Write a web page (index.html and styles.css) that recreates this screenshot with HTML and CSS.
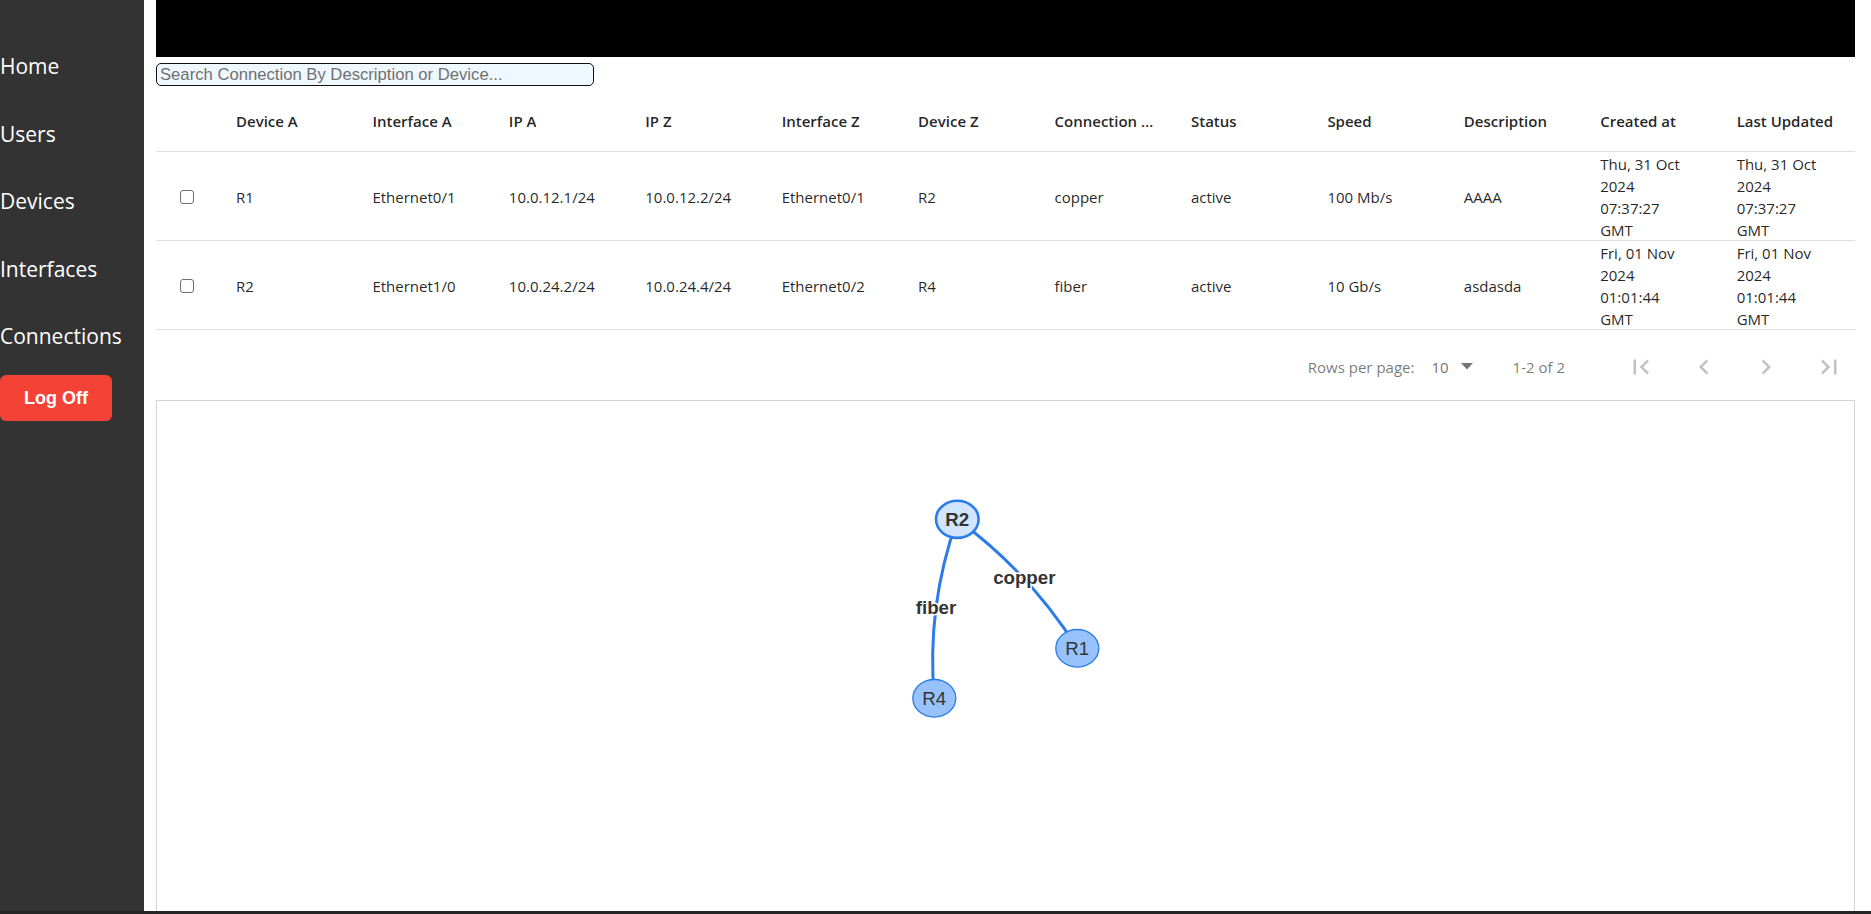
FILE: index.html
```html
<!DOCTYPE html>
<html lang="en">
<head>
<meta charset="utf-8">
<title>Connections</title>
<link rel="stylesheet" href="styles.css">
</head>
<body>
<div class="app">
  <nav class="sidebar">
    <ul class="nav">
      <li><a href="#">Home</a></li>
      <li><a href="#">Users</a></li>
      <li><a href="#">Devices</a></li>
      <li><a href="#">Interfaces</a></li>
      <li><a href="#">Connections</a></li>
    </ul>
    <button class="logoff" type="button">Log Off</button>
  </nav>
  <main class="main">
    <div class="topbar"></div>
    <input class="search" type="text" placeholder="Search Connection By Description or Device...">
    <div class="table">
      <div class="row head">
        <div class="cell check"></div>
        <div class="cell"><span class="trunc">Device A</span></div>
        <div class="cell"><span class="trunc">Interface A</span></div>
        <div class="cell"><span class="trunc">IP A</span></div>
        <div class="cell"><span class="trunc">IP Z</span></div>
        <div class="cell"><span class="trunc">Interface Z</span></div>
        <div class="cell"><span class="trunc">Device Z</span></div>
        <div class="cell"><span class="trunc">Connection Type</span></div>
        <div class="cell"><span class="trunc">Status</span></div>
        <div class="cell"><span class="trunc">Speed</span></div>
        <div class="cell"><span class="trunc">Description</span></div>
        <div class="cell"><span class="trunc">Created at</span></div>
        <div class="cell"><span class="trunc">Last Updated</span></div>
      </div>
      <div class="row body">
        <div class="cell check"><input class="box" type="checkbox"></div>
        <div class="cell">R1</div>
        <div class="cell">Ethernet0/1</div>
        <div class="cell">10.0.12.1/24</div>
        <div class="cell">10.0.12.2/24</div>
        <div class="cell">Ethernet0/1</div>
        <div class="cell">R2</div>
        <div class="cell">copper</div>
        <div class="cell">active</div>
        <div class="cell">100 Mb/s</div>
        <div class="cell">AAAA</div>
        <div class="cell"><span class="date">Thu, 31 Oct 2024 07:37:27 GMT</span></div>
        <div class="cell"><span class="date">Thu, 31 Oct 2024 07:37:27 GMT</span></div>
      </div>
      <div class="row body">
        <div class="cell check"><input class="box" type="checkbox"></div>
        <div class="cell">R2</div>
        <div class="cell">Ethernet1/0</div>
        <div class="cell">10.0.24.2/24</div>
        <div class="cell">10.0.24.4/24</div>
        <div class="cell">Ethernet0/2</div>
        <div class="cell">R4</div>
        <div class="cell">fiber</div>
        <div class="cell">active</div>
        <div class="cell">10 Gb/s</div>
        <div class="cell">asdasda</div>
        <div class="cell"><span class="date">Fri, 01 Nov 2024 01:01:44 GMT</span></div>
        <div class="cell"><span class="date">Fri, 01 Nov 2024 01:01:44 GMT</span></div>
      </div>
    </div>
    <div class="pager">
      <span class="pager-label">Rows per page:</span>
      <span class="pager-select">
        <span class="pager-value">10</span>
        <svg class="pager-caret" width="12" height="7" viewBox="0 0 12 7"><polygon points="0,0 12,0 6,6.5"/></svg>
      </span>
      <span class="pager-range">1-2 of 2</span>
      <div class="pager-btns">
        <button class="pager-btn" type="button" aria-label="First Page"><svg viewBox="0 0 24 24" width="30" height="30"><path d="M18.41 16.59L13.82 12l4.59-4.59L17 6l-6 6 6 6zM6 6h2v12H6z"/></svg></button>
        <button class="pager-btn" type="button" aria-label="Previous Page"><svg viewBox="0 0 24 24" width="30" height="30"><path d="M15.41 7.41L14 6l-6 6 6 6 1.41-1.41L10.83 12z"/></svg></button>
        <button class="pager-btn" type="button" aria-label="Next Page"><svg viewBox="0 0 24 24" width="30" height="30"><path d="M10 6L8.59 7.41 13.17 12l-4.58 4.59L10 18l6-6z"/></svg></button>
        <button class="pager-btn" type="button" aria-label="Last Page"><svg viewBox="0 0 24 24" width="30" height="30"><path d="M5.590 7.41L10.18 12l-4.59 4.59L7 18l6-6-6-6zM16 6h2v12h-2z"/></svg></button>
      </div>
    </div>
    <div class="graph">
      <svg class="graph-svg" width="1697" height="598" viewBox="157 401 1697 598">
        <path class="edge" d="M957.3 519.3 Q926.2 606.6 934.3 698.3"/>
        <path class="edge" d="M957.3 519.3 Q1031.3 574.2 1077.3 648.3"/>
        <text class="edge-label" x="936" y="607">fiber</text>
        <text class="edge-label" x="1024.3" y="577.5">copper</text>
        <ellipse class="node selected" cx="957.3" cy="519.3" rx="21.3" ry="18.6"/>
        <ellipse class="node" cx="1077.3" cy="648.3" rx="21.5" ry="18.8"/>
        <ellipse class="node" cx="934.3" cy="698.3" rx="21.5" ry="18.8"/>
        <text class="node-label bold" x="957.3" y="519.6">R2</text>
        <text class="node-label" x="1077.3" y="648.6">R1</text>
        <text class="node-label" x="934.3" y="698.6">R4</text>
      </svg>
    </div>
  </main>
</div>
<div class="strip"></div>
</body>
</html>
```

FILE: styles.css
```css
html, body {
  margin: 0;
  padding: 0;
  height: 100%;
}

body {
  display: flex;
  flex-direction: column;
  height: 100vh;
  overflow: hidden;
  background: #fff;
  font-family: "Open Sans", "Noto Sans", sans-serif;
}

.app {
  flex: 1;
  display: flex;
  min-height: 0;
}

.strip {
  height: 3px;
  flex: 0 0 3px;
  background: #262626;
}

/* Sidebar */
.sidebar {
  width: 144px;
  flex: 0 0 144px;
  background: #333;
  padding-top: 33px;
  box-sizing: border-box;
}

.nav {
  list-style: none;
  margin: 0;
  padding: 0;
}

.nav a {
  display: block;
  height: 67.5px;
  line-height: 67.5px;
  color: #fff;
  font-family: "Open Sans", sans-serif;
  font-size: 21px;
  text-decoration: none;
  white-space: nowrap;
}

.logoff {
  display: block;
  margin-top: 4.5px;
  width: 112px;
  height: 46px;
  border: 0;
  border-radius: 6px;
  background: #f44336;
  color: #fff;
  font-family: "Liberation Sans", Arial, sans-serif;
  font-weight: bold;
  font-size: 18px;
  padding: 0;
}

/* Main */
.main {
  flex: 1;
  min-width: 0;
  padding: 0 16px 0 12px;
  display: flex;
  flex-direction: column;
  overflow: hidden;
}

.topbar {
  height: 57px;
  flex: 0 0 57px;
  background: #000;
}

.search {
  margin-top: 6px;
  width: 438px;
  height: 23px;
  box-sizing: border-box;
  border: 1px solid #111;
  border-radius: 5px;
  background: #f0f8ff;
  font-family: "Liberation Sans", Arial, sans-serif;
  font-size: 16.67px;
  padding: 0 3px;
  outline: none;
  flex: 0 0 auto;
}

.search::placeholder {
  color: #707070;
}

/* Table */
.table {
  margin-top: 4px;
  font-family: "Open Sans", sans-serif;
  font-size: 15px;
  color: rgba(0, 0, 0, 0.87);
  flex: 0 0 auto;
}

.row {
  display: flex;
  box-sizing: border-box;
  border-bottom: 1px solid rgba(0, 0, 0, 0.12);
}

.row.head {
  height: 62px;
  font-weight: 600;
  padding-top: 1px;
}

.row.body {
  height: 89px;
  padding-top: 2px;
}

.cell {
  flex: 1 1 0;
  min-width: 0;
  padding: 0 16px 0 18px;
  display: flex;
  align-items: center;
  white-space: nowrap;
}

.cell.check {
  flex: 0 0 62px;
  padding: 0;
  justify-content: center;
}

.trunc {
  overflow: hidden;
  text-overflow: ellipsis;
  white-space: nowrap;
}

.date {
  white-space: normal;
  max-width: 88px;
  line-height: 22px;
}

.box {
  appearance: none;
  -webkit-appearance: none;
  width: 14px;
  height: 14px;
  margin: 0;
  border: 1px solid #6e6e6e;
  border-radius: 3px;
  background: #fff;
}

/* Pagination */
.pager {
  height: 70px;
  flex: 0 0 70px;
  box-sizing: border-box;
  padding: 3px 1.5px 0 0;
  display: flex;
  align-items: center;
  justify-content: flex-end;
  font-family: "Open Sans", sans-serif;
  font-size: 15px;
  color: rgba(0, 0, 0, 0.54);
}

.pager-label {
  margin-right: 17px;
}

.pager-select {
  display: flex;
  align-items: center;
  gap: 12px;
}

.pager-value {
  color: rgba(0, 0, 0, 0.6);
}

.pager-caret {
  fill: rgba(0, 0, 0, 0.54);
}

.pager-range {
  margin: 0 51px 0 40px;
}

.pager-btns {
  display: flex;
  gap: 12.5px;
}

.pager-btn {
  width: 50px;
  height: 50px;
  padding: 0;
  border: 0;
  background: none;
  display: flex;
  align-items: center;
  justify-content: center;
}

.pager-btn svg {
  fill: #c2c2c2;
}

/* Graph */
.graph {
  flex: 0 0 600px;
  height: 600px;
  box-sizing: border-box;
  border: 1px solid #d3d3d3;
}

.graph-svg {
  display: block;
}

.edge {
  fill: none;
  stroke: #2b7ce9;
  stroke-width: 3;
}

.edge-label {
  font-family: "Liberation Sans", Arial, sans-serif;
  font-size: 18.7px;
  font-weight: bold;
  fill: #343434;
  stroke: #fff;
  stroke-width: 3px;
  paint-order: stroke;
  text-anchor: middle;
  dominant-baseline: central;
}

.node {
  fill: #97c2fc;
  stroke: #2b7ce9;
  stroke-width: 1.3;
}

.node.selected {
  fill: #d2e5ff;
  stroke-width: 2.6;
}

.node-label {
  font-family: "Liberation Sans", Arial, sans-serif;
  font-size: 18.7px;
  fill: #343434;
  text-anchor: middle;
  dominant-baseline: central;
}

.node-label.bold {
  font-weight: bold;
}
```
